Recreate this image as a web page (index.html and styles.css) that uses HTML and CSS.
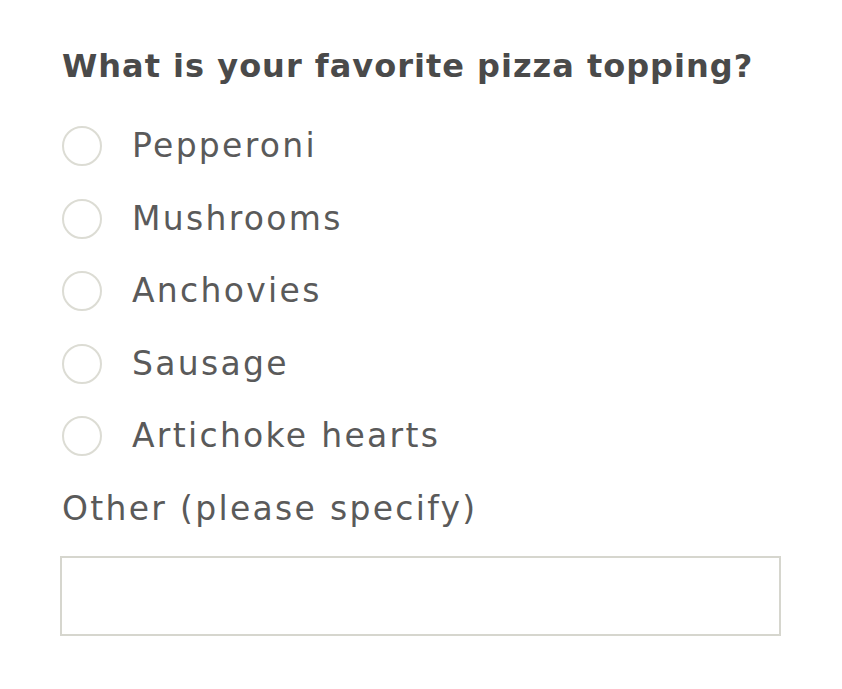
FILE: index.html
```html
<!DOCTYPE html>
<html lang="en">
<head>
<meta charset="utf-8">
<title>Survey question</title>
<link rel="stylesheet" href="styles.css">
</head>
<body>
<form class="survey">
  <h1 class="question">What is your favorite pizza topping?</h1>
  <div class="options">
    <label class="option"><span class="radio"></span><span class="label">Pepperoni</span></label>
    <label class="option"><span class="radio"></span><span class="label">Mushrooms</span></label>
    <label class="option"><span class="radio"></span><span class="label">Anchovies</span></label>
    <label class="option"><span class="radio"></span><span class="label">Sausage</span></label>
    <label class="option"><span class="radio"></span><span class="label">Artichoke hearts</span></label>
  </div>
  <div class="other-label">Other (please specify)</div>
  <div class="other-input"></div>
</form>
</body>
</html>
```
FILE: styles.css
```css
html, body {
  margin: 0;
  padding: 0;
  background: #ffffff;
}
body {
  font-family: "DejaVu Sans", sans-serif;
  color: #5a5a5a;
}
.survey {
  display: flex;
  flex-direction: column;
  padding: 40px 0 0 60px;
  width: 721px;
}
.question {
  margin: 0 0 0 2px;
  height: 52px;
  line-height: 52px;
  font-size: 32px;
  font-weight: bold;
  letter-spacing: 1px;
  color: #4a4a4a;
  white-space: nowrap;
}
.options {
  display: flex;
  flex-direction: column;
  margin-top: 18px;
}
.option {
  display: flex;
  align-items: center;
  height: 72.5px;
  gap: 30px;
  padding-left: 2px;
}
.radio {
  box-sizing: border-box;
  width: 40px;
  height: 40px;
  border: 2px solid #dcdcd4;
  border-radius: 50%;
  flex: none;
}
.label, .other-label {
  font-size: 33px;
  line-height: 40px;
  letter-spacing: 2.3px;
}
.other-label {
  height: 73px;
  display: flex;
  align-items: center;
  padding-left: 2px;
}
.other-input {
  box-sizing: border-box;
  margin-top: 10.5px;
  height: 80px;
  border: 2px solid #d6d6ce;
}
```
